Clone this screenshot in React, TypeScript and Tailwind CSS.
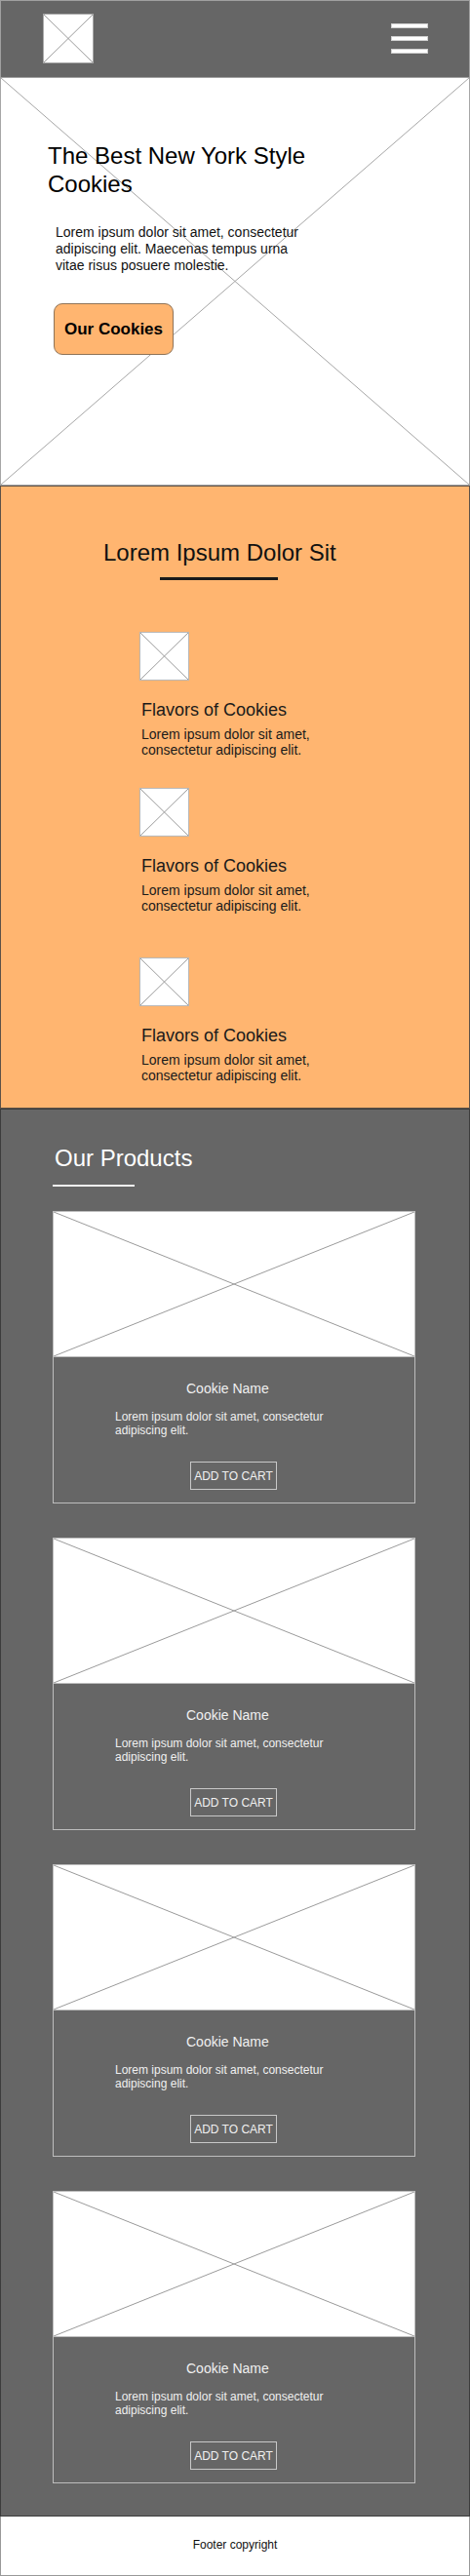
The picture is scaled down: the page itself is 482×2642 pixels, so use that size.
import React from "react";

function Cross({ color = "#9a9a9a" }: { color?: string }) {
    return (
        <svg className="absolute inset-0 w-full h-full" preserveAspectRatio="none" viewBox="0 0 100 100">
            <line x1="0" y1="0" x2="100" y2="100" stroke={color} strokeWidth="1" vectorEffect="non-scaling-stroke" />
            <line x1="100" y1="0" x2="0" y2="100" stroke={color} strokeWidth="1" vectorEffect="non-scaling-stroke" />
        </svg>
    );
}

function Placeholder({ className }: { className: string }) {
    return (
        <div className={`relative bg-white ${className}`}>
            <Cross />
        </div>
    );
}

function Flavor({ top }: { top: string }) {
    return (
        <div className={top}>
            <Placeholder className="ml-[142px] w-[51px] h-[50px] border-[1.5px] border-[#b8b8b8]" />
            <h3 className="ml-[144px] mt-[19px] text-[18px] leading-[22px] text-[#1a1a1a]">Flavors of Cookies</h3>
            <p className="ml-[144px] mt-[6px] w-[200px] text-[14px] leading-[16px] text-[#1a1a1a]">
                Lorem ipsum dolor sit amet, consectetur adipiscing elit.
            </p>
        </div>
    );
}

function ProductCard() {
    return (
        <div className="w-[372px] h-[300px] border-[1.5px] border-[#bdbdbd] flex flex-col">
            <div className="relative h-[149px] bg-white border-b-[1.5px] border-[#bdbdbd]">
                <Cross />
            </div>
            <div className="flex-1 bg-[#666666]">
                <h4 className="ml-[136px] mt-[24px] text-[14px] leading-[16px] text-[#f0f0f0]">Cookie Name</h4>
                <p className="ml-[63px] mt-[14px] w-[222px] text-[12px] leading-[14px] text-[#f0f0f0]">
                    Lorem ipsum dolor sit amet, consectetur adipiscing elit.
                </p>
                <button className="ml-[140px] mt-[25px] w-[89px] h-[29px] border-[1.5px] border-[#c8c8c8] text-[12px] leading-[14px] text-[#f0f0f0] flex items-center justify-center">
                    ADD TO CART
                </button>
            </div>
        </div>
    );
}

export default function App() {
    return (
        <div className="w-[482px] font-['Liberation_Sans',Arial,sans-serif] bg-white">
            {/* Header */}
            <header className="h-[80px] bg-[#666666] border border-[#a0a0a0] flex justify-between pl-[43px] pr-[42px]">
                <Placeholder className="mt-[13px] w-[52px] h-[51px] border-[1.5px] border-[#aaaaaa]" />
                <div className="mt-[23px] flex flex-col gap-[8px]">
                    <span className="block w-[38px] h-[5px] bg-white border border-[#d0d0d0]" />
                    <span className="block w-[38px] h-[5px] bg-white border border-[#d0d0d0]" />
                    <span className="block w-[38px] h-[5px] bg-white border border-[#d0d0d0]" />
                </div>
            </header>

            {/* Hero */}
            <section className="relative h-[418px] border-x border-b border-[#a6a6a6] overflow-hidden">
                <Cross color="#a6a6a6" />
                <div className="relative pt-[65px]">
                    <h1 className="ml-[48px] w-[290px] text-[24px] leading-[29px] text-black">The Best New York Style Cookies</h1>
                    <p className="ml-[56px] mt-[27px] w-[255px] text-[14px] leading-[17px] text-[#111]">
                        Lorem ipsum dolor sit amet, consectetur adipiscing elit. Maecenas tempus urna vitae risus posuere molestie.
                    </p>
                    <button className="ml-[54px] mt-[30px] w-[123px] h-[53px] rounded-[9px] bg-[#FFB570] border border-[#8f7458] text-[17px] font-bold text-black">
                        Our Cookies
                    </button>
                </div>
            </section>

            {/* Features */}
            <section className="h-[639px] bg-[#FFB570] border border-[#5e5147] pt-[54px]">
                <h2 className="ml-[105px] text-[24px] leading-[28px] text-[#111]">Lorem Ipsum Dolor Sit</h2>
                <div className="ml-[163px] mt-[11px] w-[121px] h-[3px] bg-[#1a1a1a]" />
                <Flavor top="mt-[53px]" />
                <Flavor top="mt-[31px]" />
                <Flavor top="mt-[45px]" />
            </section>

            {/* Products */}
            <section className="h-[1444px] bg-[#666666] border border-[#3c3c3c] pt-[36px]">
                <h2 className="ml-[55px] text-[24px] leading-[28px] text-white">Our Products</h2>
                <div className="ml-[53px] mt-[13px] w-[84px] h-[2px] bg-[#f2f2f2]" />
                <div className="ml-[53px] mt-[25px] flex flex-col gap-[35px]">
                    <ProductCard />
                    <ProductCard />
                    <ProductCard />
                    <ProductCard />
                </div>
            </section>

            {/* Footer */}
            <footer className="h-[61px] border-x border-b border-[#999999] flex items-center justify-center pb-[2px]">
                <p className="text-[12px] leading-[14px] text-[#111]">Footer copyright</p>
            </footer>
        </div>
    );
}
